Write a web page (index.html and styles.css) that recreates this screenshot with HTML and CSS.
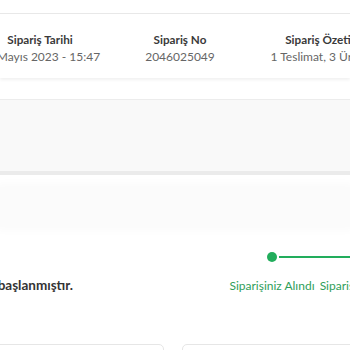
FILE: index.html
```html
<!DOCTYPE html>
<html>
<head>
    <title>Sipariş Detayı</title>
    <link rel="stylesheet" href="styles.css">
</head>
<body>
    <div class="summary-card">
        <div class="summary-row">
            <div class="summary-item">
                <div class="label">Sipariş Tarihi</div>
                <div class="value">12 Mayıs 2023 - 15:47</div>
            </div>
            <div class="summary-item">
                <div class="label">Sipariş No</div>
                <div class="value">2046025049</div>
            </div>
            <div class="summary-item">
                <div class="label">Sipariş Özeti</div>
                <div class="value">1 Teslimat, 3 Ürün</div>
            </div>
        </div>
    </div>

    <div class="info-section"></div>
    <div class="info-divider"></div>
    <div class="faint-band"></div>

    <div class="status-row">
        <div class="status-text">
            <span>Siparişinizin hazırlanmasına başlanmıştır.</span>
        </div>
        <div class="steps">
            <div class="step done first">
                <div class="dot"></div>
                <div class="step-label">Siparişiniz Alındı</div>
            </div>
            <div class="step done">
                <div class="dot"></div>
                <div class="step-label">Sipariş Hazırlanıyor</div>
            </div>
        </div>
    </div>

    <div class="cards">
        <div class="card"></div>
        <div class="card"></div>
    </div>
</body>
</html>
```

FILE: styles.css
```css
body {
    margin: 0;
    font-family: Lato, "Open Sans", sans-serif;
    background: #fff;
    overflow: hidden;
}
.summary-card {
    margin-top: 13px;
    height: 64px;
    border-top: 1px solid #e8e8e8;
    background: #fff;
    box-shadow: 0 2px 3px rgba(0, 0, 0, 0.06);
}
.summary-row {
    display: flex;
    margin-left: -30px;
    padding-top: 16px;
}
.summary-item {
    flex: 0 0 140px;
    text-align: center;
    white-space: nowrap;
}
.summary-item:last-child {
    flex-basis: 136px;
}
.label {
    font-size: 11.7px;
    font-weight: bold;
    color: #3a3a3a;
    line-height: 18px;
}
.value {
    font-size: 12px;
    color: #666;
    line-height: 18px;
}
.info-section {
    margin-top: 21px;
    height: 71px;
    border-top: 1px solid #ececec;
    background: #f9f9f9;
}
.info-divider {
    height: 4px;
    background: #ebebeb;
}
.faint-band {
    margin-top: 12px;
    height: 40px;
    background: #fbfbfb;
    box-shadow: 0 0 8px 4px #fbfbfb;
}
.status-row {
    display: flex;
    align-items: flex-end;
    margin-top: 5px;
    height: 62px;
}
.status-text {
    width: 73px;
    display: flex;
    justify-content: flex-end;
    white-space: nowrap;
    font-size: 13.5px;
    font-weight: bold;
    color: #333;
    padding-bottom: 1px;
}
.steps {
    display: flex;
    margin-left: 150px;
}
.step {
    position: relative;
    width: 98px;
    display: flex;
    flex-direction: column;
    align-items: center;
}
.step::before {
    content: "";
    position: absolute;
    top: 4px;
    left: 0;
    right: 0;
    height: 2px;
    background: #22ad5c;
}
.step.first::before {
    left: 56px;
}
.dot {
    position: relative;
    width: 10px;
    height: 10px;
    border-radius: 50%;
    background: #22ad5c;
}
.step-label {
    margin-top: 16px;
    font-size: 12px;
    color: #2f9e5a;
    white-space: nowrap;
    line-height: 16px;
}
.cards {
    display: flex;
    gap: 18px;
    margin-top: 50px;
    margin-left: -60px;
}
.card {
    flex: 0 0 222px;
    height: 60px;
    border: 1px solid #e6e6e6;
    border-radius: 5px;
    background: #fff;
}
```
